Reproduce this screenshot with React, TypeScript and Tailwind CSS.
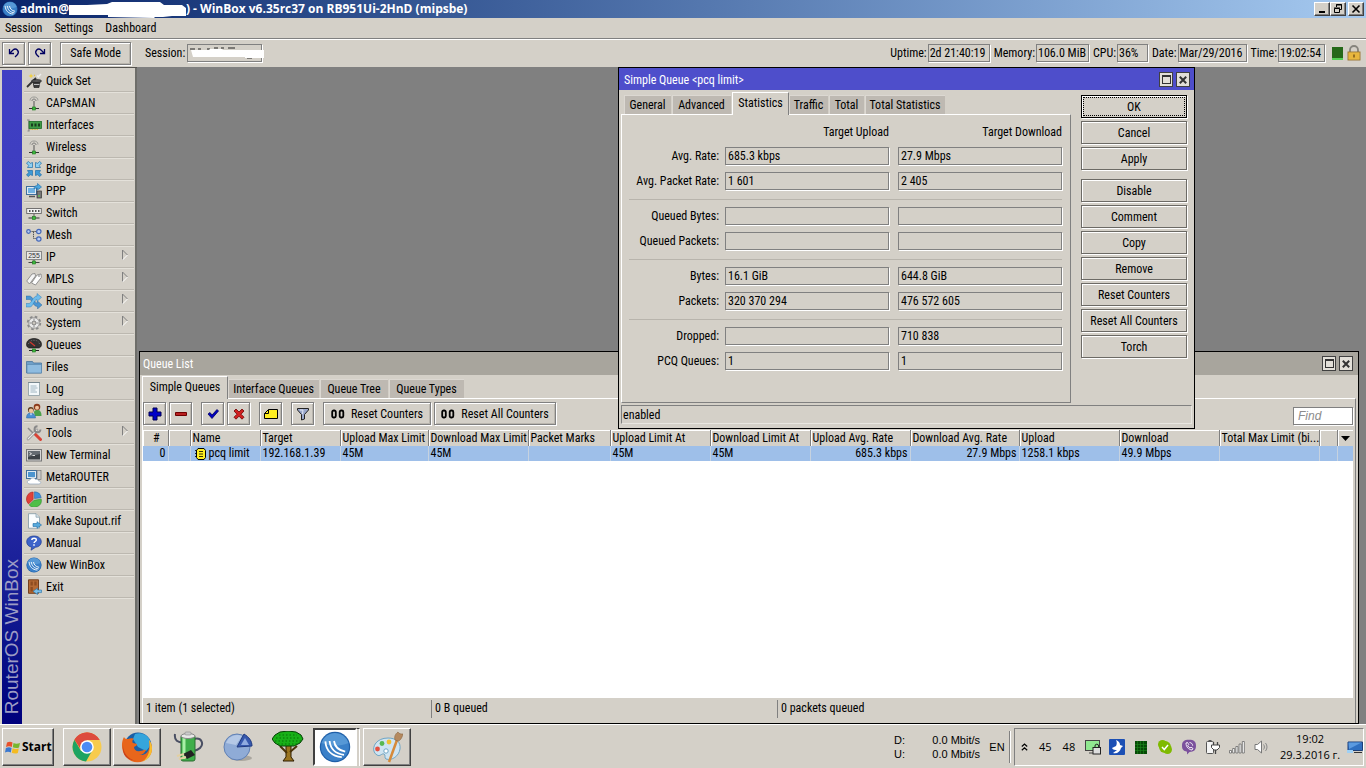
import React, { useState } from 'react';
import clsx from 'clsx';

type IconProps = { children: React.ReactNode; size?: 16 | 32; className?: string };

const Svg: React.FC<IconProps> = ({ children, size = 16, className = '' }) => (
  <svg
    viewBox={`0 0 ${size} ${size}`}
    width={size}
    height={size}
    fill="none"
    aria-hidden="true"
    className={clsx('shrink-0', className)}
  >
    {children}
  </svg>
);

const Antenna = () => (
  <Svg>
    <path d="M4 5.500C4 3 6 2 8 2s4 1 4 3.500" stroke="#9a9a96" />
    <path d="M6 6c0-1.300.9-1.900 2-1.900s2 .6 2 1.900" stroke="#777" />
    <path d="M8 6v7" stroke="#555" />
    <path d="M3 13.500h10" stroke="#333" />
    <rect x="6.500" y="12" width="3" height="3" fill="#3fb83f" stroke="#1d7a1d" strokeWidth=".6" />
  </Svg>
);

const Ball = ({ size = 16 }: { size?: 16 | 32 }) => (
  <svg viewBox="0 0 16 16" width={size} height={size} fill="none" aria-hidden="true" className="shrink-0">
    <circle cx="8" cy="8" r="7.600" fill="#1f5fa8" />
    <circle cx="8" cy="8" r="7" fill="#3a80c8" />
    <path d="M1.300 6a7 7 0 0 1 13.400 0C10 8 5 7.500 1.300 6z" fill="#69a8e0" opacity=".6" />
    <path
      d="M3.200 5.200c.3 4.300 3 7.500 8.200 7.900M5.300 5c.4 3.800 2.800 6.300 7.200 6.900M7.500 5c.4 2.700 2.200 4.700 5.600 5.300"
      stroke="#fff"
      strokeWidth=".9"
    />
  </svg>
);

const icons: Record<string, React.ReactNode> = {
  'Quick Set': (
    <Svg>
      <path d="M1 14L10 5" stroke="#333" strokeWidth="1.800" />
      <path d="M7 8h7l-1 6.500H8z" fill="#3b3b3b" stroke="#111" strokeWidth=".6" />
      <ellipse cx="10.500" cy="8" rx="5" ry="1.500" fill="#555" stroke="#111" strokeWidth=".6" />
      <path d="M8 11.500h5.500" stroke="#bbb" />
      <path d="M12 4l3-3M11 2.500l2 2" stroke="#eee" strokeWidth="1.500" />
      <path d="M5 .5l.7 1.800 1.800.7-1.800.7L5 5.500l-.7-1.800L2.500 3l1.800-.7z" fill="#f3d23a" />
      <path d="M8 1l.4 1 1 .4-1 .4-.4 1" fill="#e8b820" />
    </Svg>
  ),
  CAPsMAN: <Antenna />,
  Interfaces: (
    <Svg>
      <path d="M1 3h2v11H1.500" stroke="#888" strokeWidth="1.200" />
      <rect x="3" y="4.500" width="12.500" height="7" fill="#3f9a45" stroke="#1d6a26" strokeWidth=".8" />
      <path d="M5 6.500h2v3H5zM8.500 6.500h2v3h-2zM12 6.500h2v3h-2z" fill="#1a3b1e" />
      <path d="M4.500 12.500h8" stroke="#d3b63c" strokeDasharray="1 .6" />
    </Svg>
  ),
  Wireless: <Antenna />,
  Bridge: (
    <Svg>
      <g stroke="#1e6fa8" strokeWidth=".7">
        <path d="M.5 2l2-1.500 1.700 1.900L6.500 1.500v5h-5l1.200-2z" fill="#8fd0f2" />
        <path d="M15.500 2l-2-1.500-1.700 1.900-2.300-.9v5h5l-1.200-2z" fill="#8fd0f2" />
        <path d="M.5 14l2 1.500 1.700-1.900 2.300.9v-5h-5l1.200 2z" fill="#3f9ad6" />
        <path d="M15.500 14l-2 1.500-1.700-1.900-2.300.9v-5h5l-1.200 2z" fill="#3f9ad6" />
      </g>
    </Svg>
  ),
  PPP: (
    <Svg>
      <rect x=".5" y="3.500" width="10" height="8" fill="#dfe9f2" stroke="#3f6f9c" />
      <rect x="2" y="5" width="7" height="5" fill="#6fb1e2" />
      <path d="M3 13.500h6" stroke="#555" strokeWidth="1.500" />
      <rect x="11" y="8" width="4.500" height="7" fill="#777" stroke="#333" strokeWidth=".7" />
      <path d="M8 6c0-2.500 1.500-3.500 3.500-3.500V.5L15.500 4l-4 3V5C10 5 9 5 8 6z" fill="#4ba7e0" stroke="#1f6da6" strokeWidth=".6" />
      <path d="M12 13h2" stroke="#5ddb4d" />
    </Svg>
  ),
  Switch: (
    <Svg>
      <rect x=".7" y="3.500" width="14.600" height="5" fill="#f2f2f2" stroke="#666" strokeWidth=".9" />
      <path d="M3 6h1.500M6 6h1.500M9 6h1.500M12 6h1.500" stroke="#222" strokeWidth="1.500" />
      <path d="M8 9v3" stroke="#555" />
      <path d="M2.500 13h11" stroke="#333" />
      <rect x="6.500" y="11.500" width="3" height="3" fill="#3fb83f" stroke="#1d7a1d" strokeWidth=".6" />
    </Svg>
  ),
  Mesh: (
    <Svg>
      <path d="M4 4.500h7M7.500 4.500v7H11" stroke="#555" strokeDasharray="1.500 .7" />
      <g fill="#b9cdf3" stroke="#4568b8" strokeWidth="1.200">
        <circle cx="2.500" cy="4.500" r="1.800" />
        <circle cx="12.800" cy="4.500" r="2.200" />
        <circle cx="12.800" cy="12" r="2.200" />
      </g>
    </Svg>
  ),
  IP: (
    <Svg>
      <rect x=".5" y="2.500" width="15" height="8" fill="#e9e9e9" stroke="#888" />
      <text x="8" y="9" textAnchor="middle" fontSize="7" fill="#333" className="font-['Liberation_Sans']">255</text>
      <path d="M8 11v2M2.500 13.500h11" stroke="#444" />
      <rect x="6.500" y="12" width="3" height="3" fill="#3fb83f" stroke="#1d7a1d" strokeWidth=".6" />
    </Svg>
  ),
  MPLS: (
    <Svg>
      <path d="M.7 10L6 3l3-.5.500 2.500-6 8z" fill="#f4f4f4" stroke="#7d7d7d" strokeWidth=".8" />
      <path d="M5.500 12L11 4l4-1 .3 3.500L9.500 14z" fill="#fdfdfd" stroke="#7d7d7d" strokeWidth=".8" />
      <circle cx="13" cy="5" r=".8" fill="#666" />
    </Svg>
  ),
  Routing: (
    <Svg>
      <path d="M0 3h3.500c3 0 5 7 8 7V8l4.500 4-4.500 4v-2.500C7 13.500 6 6.500 3.500 6.500H0z" fill="#4b96d2" stroke="#1d5c96" strokeWidth=".4" />
      <path d="M0 14h4c3 0 4-7.500 7-7.500v2L15.500 4.300 11 .5V3C7 3 5.500 10.500 3 10.500H0z" fill="#6fbcec" stroke="#1d6ca6" strokeWidth=".4" />
    </Svg>
  ),
  System: (
    <Svg>
      <circle cx="8" cy="8" r="6.300" stroke="#8a8a8a" strokeWidth="1.800" strokeDasharray="2.600 2.350" />
      <circle cx="8" cy="8" r="5.300" fill="#e9e9e9" stroke="#8f8f8f" strokeWidth=".8" />
      <circle cx="8" cy="8" r="2" fill="#c9c5bd" stroke="#777" strokeWidth=".9" />
      <path d="M8 3.500v2M8 10.500v2M3.500 8h2M10.500 8h2" stroke="#888" />
    </Svg>
  ),
  Queues: (
    <Svg>
      <path d="M.5 7.500C.5 3.500 4 1.500 8 1.500s7.500 2 7.500 6c0 2-1.500 3.500-3 3.500h-9c-1.500 0-3-1.500-3-3.500z" fill="#333" stroke="#111" strokeWidth=".6" />
      <path d="M2.500 7C3 4.500 5 3.300 8 3.300s5 1.200 5.500 3.700" stroke="#777" strokeWidth=".9" strokeDasharray="1 1.200" />
      <path d="M4 5l5 4" stroke="#d03a2e" strokeWidth="1.200" />
      <path d="M3 13.500h10" stroke="#222" />
      <rect x="6.500" y="12" width="3" height="3" fill="#3fb83f" stroke="#1d7a1d" strokeWidth=".6" />
    </Svg>
  ),
  Files: (
    <Svg>
      <path d="M.5 2.500h6l1 1.500h8v10H.5z" fill="#6f9fc8" stroke="#47749c" strokeWidth=".8" />
      <path d="M1 5.500h14.500V14H1z" fill="#8fbce0" stroke="#5a88b0" strokeWidth=".7" />
    </Svg>
  ),
  Log: (
    <Svg>
      <path d="M2.500 1.500h11v13h-11z" fill="#f3f8fa" stroke="#8a9aa2" strokeWidth=".8" />
      <path d="M2.500 1.500h11" stroke="#56666e" strokeDasharray="1 1" />
      <path d="M4.500 5h6M4.500 7h7M4.500 9h5M4.500 11h6.500" stroke="#97aebb" strokeWidth=".9" />
    </Svg>
  ),
  Radius: (
    <Svg>
      <path d="M8 9.500c0-2 1.500-2.500 3.500-2.500S15.500 8 15.500 13H9z" fill="#4ba14b" />
      <circle cx="11" cy="4" r="3.300" fill="#8c3b1c" />
      <circle cx="11" cy="4.800" r="2" fill="#f0c39c" />
      <path d="M.5 15c0-3.500 1.500-5 4-5s5 1.500 5 5z" fill="#4b8fd2" stroke="#2a62a0" strokeWidth=".5" />
      <circle cx="4.800" cy="6.800" r="2.900" fill="#5b3a1c" />
      <circle cx="5" cy="7.700" r="2.200" fill="#f0c39c" />
      <path d="M4 10.500l1 2 1-2" fill="#fff" />
    </Svg>
  ),
  Tools: (
    <Svg>
      <path d="M2 3l6 6" stroke="#8a8a8a" strokeWidth="1.500" />
      <path d="M8.500 8.500l6 6" stroke="#d94336" strokeWidth="3" strokeLinecap="round" />
      <path d="M2 14l9-9" stroke="#8a8a8a" strokeWidth="2.600" strokeLinecap="round" />
      <path d="M2 14l9-9" stroke="#e9e9e9" strokeWidth="1.200" strokeLinecap="round" />
      <path d="M14.500 4.500A3 3 0 1 1 11.500 1.300" stroke="#888" strokeWidth="1.900" />
    </Svg>
  ),
  'New Terminal': (
    <Svg>
      <rect x=".5" y="2.500" width="15" height="11.500" fill="#d7d7d7" stroke="#777" />
      <rect x="2" y="4" width="12" height="8.500" fill="#3c4248" />
      <path d="M2 4h12v3L2 10z" fill="#646b72" />
      <path d="M3.500 5.500l2 1.200-2 1.200M6.500 8.500h2.500" stroke="#fff" strokeWidth=".8" />
    </Svg>
  ),
  MetaROUTER: (
    <Svg>
      <rect x=".5" y="1.500" width="10" height="8" fill="#dfe9f2" stroke="#3f6f9c" />
      <rect x="2" y="3" width="7" height="5" fill="#4c94cf" />
      <rect x="11" y="1.500" width="4" height="9" fill="#ccc" stroke="#777" strokeWidth=".7" />
      <path d="M4 15c-3.500 0-3.500-4 0-4 .5-2.500 5-2.500 5.500-.5 2-.5 3 .5 3 1.500 3 0 3 3 0 3z" fill="#fff" stroke="#92a8bd" strokeWidth=".7" />
    </Svg>
  ),
  Partition: (
    <Svg>
      <path d="M7.200 8.500V1A7 7 0 0 0 2.500 13z" fill="#e0413a" stroke="#9c1b16" strokeWidth=".5" />
      <path d="M8.500 7.500V.8a7 7 0 0 1 6.700 6z" fill="#3f8fda" stroke="#1c5a9c" strokeWidth=".5" />
      <path d="M8 9.200l7.300-1A7 7 0 0 1 3.200 14z" fill="#4fbf47" stroke="#237c1f" strokeWidth=".5" />
    </Svg>
  ),
  'Make Supout.rif': (
    <Svg>
      <path d="M2.500 .7h7.500l3.500 3.500v11h-11z" fill="#fafdfe" stroke="#8298a4" strokeWidth=".8" />
      <path d="M10 .7v3.500h3.500" fill="#d4e2ea" stroke="#8298a4" strokeWidth=".7" />
      <path d="M7 10.500h4V8.700l4.500 3.300-4.500 3.300v-1.800H7z" fill="#55a9dc" stroke="#1f6da6" strokeWidth=".6" />
    </Svg>
  ),
  Manual: (
    <Svg>
      <path d="M8 1c4.500 0 7.300 2.500 7.300 5.800S12.500 12 9.500 12.300L5 15.200l.7-3C2.500 11.500.7 9.500.7 6.800.7 3.500 3.500 1 8 1z" fill="#3d63c9" stroke="#1c3a8f" strokeWidth=".7" />
      <path d="M5.800 5c.2-2.500 4.600-2.300 4.500 0 0 1.500-2.200 1.500-2.200 3M8 9.300v1.400" stroke="#fff" strokeWidth="1.500" />
    </Svg>
  ),
  'New WinBox': <Ball />,
  Exit: (
    <Svg>
      <path d="M2.500 .8h10v13.500h-10z" fill="#b56a34" stroke="#6c3714" strokeWidth=".9" />
      <path d="M4.500 2.500h2.300v4H4.500zM8.300 2.500h2.300v4H8.300zM4.500 8h2.300v4.500H4.500z" fill="#8e4c20" />
      <path d="M15.500 11h-4V9.200L7 12.300l4.500 3.200v-1.900h4z" fill="#7cc0ea" stroke="#2370a8" strokeWidth=".6" />
    </Svg>
  ),
};

const menuItems = [
  { label: 'Quick Set' },
  { label: 'CAPsMAN' },
  { label: 'Interfaces' },
  { label: 'Wireless' },
  { label: 'Bridge' },
  { label: 'PPP' },
  { label: 'Switch' },
  { label: 'Mesh' },
  { label: 'IP', sub: true },
  { label: 'MPLS', sub: true },
  { label: 'Routing', sub: true },
  { label: 'System', sub: true },
  { label: 'Queues' },
  { label: 'Files' },
  { label: 'Log' },
  { label: 'Radius' },
  { label: 'Tools', sub: true },
  { label: 'New Terminal' },
  { label: 'MetaROUTER' },
  { label: 'Partition' },
  { label: 'Make Supout.rif' },
  { label: 'Manual' },
  { label: 'New WinBox' },
  { label: 'Exit' },
];

const raised = 'border border-[#6c6a65] bg-[#d4d0c8] shadow-[inset_1px_1px_0_#fff,1px_1px_0_#fff]';
const toolBtn = 'flex h-[23px] items-center justify-center border border-[#808080] bg-[#d4d0c8] shadow-[inset_1px_1px_0_#fff,inset_-1px_-1px_0_#bab6ae,1px_1px_0_#fff]';
const sunken = 'border border-[#808080] bg-[#d4d0c8] shadow-[1px_1px_0_#fff]';
const classic = 'border border-t-white border-l-white border-r-[#404040] border-b-[#404040] bg-[#d4d0c8] shadow-[inset_-1px_-1px_0_#808080]';

const TitleBar = () => (
  <header className="flex h-[18px] shrink-0 items-center bg-linear-to-r from-[#0a246a] to-[#a6caf0] pl-[2px] pr-[2px] text-white">
    <Ball />
    <h1 className="ml-[2px] flex items-center font-['Open_Sans'] text-[12px] font-bold leading-[18px]">
      admin@
      <svg width="117" height="18" viewBox="0 0 117 18" aria-hidden="true">
        <path d="M0 5h18l20-1 5-2h48l4 3h18l4 3v8h-14l-9 1H86l-1 1-46-1v-2H0z" fill="#fff" />
      </svg>
      <span>) - WinBox v6.35rc37 on RB951Ui-2HnD (mipsbe)</span>
    </h1>
    <div className="ml-auto flex h-[14px]">
      <button aria-label="Minimize" className={clsx(classic, 'flex w-4 items-end justify-center pb-[2px]')}>
        <span className="h-[2px] w-[6px] bg-black" />
      </button>
      <button aria-label="Restore" className={clsx(classic, 'flex w-4 items-center justify-center')}>
        <svg width="10" height="10" viewBox="0 0 10 10" fill="none" stroke="#000" aria-hidden="true">
          <path d="M3.500 3V.5h5v5H7M3 1h6M1.500 4.500h5v4h-5zM1 4h6" />
        </svg>
      </button>
      <button aria-label="Close" className={clsx(classic, 'ml-[2px] flex w-4 items-center justify-center')}>
        <svg width="10" height="10" viewBox="0 0 10 10" stroke="#000" strokeWidth="1.600" aria-hidden="true">
          <path d="M1.500 1.500l7 7M8.500 1.500l-7 7" />
        </svg>
      </button>
    </div>
  </header>
);

const stats = [
  { id: 'uptime', label: 'Uptime:', value: '2d 21:40:19', width: 'w-[62px]' },
  { id: 'memory', label: 'Memory:', value: '106.0 MiB', width: 'w-[53px]' },
  { id: 'cpu', label: 'CPU:', value: '36%', width: 'w-[31px]' },
  { id: 'date', label: 'Date:', value: 'Mar/29/2016', width: 'w-[69px]' },
  { id: 'time', label: 'Time:', value: '19:02:54', width: 'w-[47px]' },
];

const Toolbar = () => (
  <div className="flex h-[29px] shrink-0 items-center border-t border-[#808080] px-[2px] shadow-[inset_0_1px_0_#fff]">
    <button aria-label="Undo" className={clsx(toolBtn, 'w-[23px]')}>
      <svg width="14" height="12" viewBox="0 0 14 12" fill="none" stroke="#000060" strokeWidth="1.300" aria-hidden="true">
        <path d="M2.500 2v4.500H7M3 6l3-3c3-2.500 7 1 4.500 4.500L8 10" />
      </svg>
    </button>
    <button aria-label="Redo" className={clsx(toolBtn, 'ml-[3px] w-[23px]')}>
      <svg width="14" height="12" viewBox="0 0 14 12" fill="none" stroke="#000060" strokeWidth="1.300" aria-hidden="true">
        <path d="M11.500 2v4.500H7M11 6L8 3C5 .5 1 4 3.500 7.500L6 10" />
      </svg>
    </button>
    <button className={clsx(toolBtn, 'ml-[9px] w-[71px]')}>Safe Mode</button>
    <label htmlFor="session" className="ml-[14px] w-[42px]">Session:</label>
    <div className="relative">
      <input id="session" readOnly className={clsx(sunken, 'block h-[18px] w-[75px]')} />
      <svg width="80" height="18" viewBox="0 0 80 18" fill="none" className="absolute top-0 left-0" aria-hidden="true">
        <path d="M3 5h5M11 5h3M20 5h3M27 4h4M34 4h3M41 4h7M60 14h5" stroke="#222" />
        <path d="M4 6h18l1-1h12l1 1h41v8H58v-1H6z" fill="#fff" />
      </svg>
    </div>
    <div className="ml-auto flex items-center">
      {stats.map((s) => (
        <div key={s.id} className="mr-1 flex items-center">
          <label htmlFor={s.id} className="mr-px">{s.label}</label>
          <input id={s.id} readOnly value={s.value} className={clsx(sunken, 'h-[18px] px-px', s.width)} />
        </div>
      ))}
      <span className="mx-[3px] h-[13px] w-[11px] border-b-2 border-[#55d055] bg-[#26691a]" />
      <Svg className="mr-[2px]">
        <path d="M4 7V5a4 4 0 0 1 8 0v2" stroke="#85837c" strokeWidth="1.800" />
        <rect x="2" y="7" width="12" height="8" fill="#f4c64a" stroke="#97702a" strokeWidth=".9" />
        <path d="M3 9h10M3 11h10M3 13h10" stroke="#d79e2c" strokeWidth=".8" />
        <path d="M8 9.500v3" stroke="#6b4a13" strokeWidth="1.300" />
      </Svg>
    </div>
  </div>
);

const Sidebar = () => (
  <div className="flex w-[137px] shrink-0 border-r-2 border-[#6e6e6a] pl-[2px] pt-[2px]">
    <div className="flex w-5 items-end justify-center bg-linear-to-b from-[#4040c4] via-[#3838b8] to-[#00007c] pb-[10px]">
      <span className="rotate-180 whitespace-nowrap font-['Liberation_Sans'] text-[19px] leading-5 text-[#9c9cc4] [writing-mode:vertical-rl]">
        RouterOS WinBox
      </span>
    </div>
    <nav className="ml-[2px] w-[110px]">
      {menuItems.map((item) => (
        <button
          key={item.label}
          className="flex h-[22px] w-full items-center gap-1 border-b border-[#bcb8b0] pl-[2px] text-left shadow-[0_1px_0_#e4e1da]"
        >
          {icons[item.label]}
          <span>{item.label}</span>
          {item.sub && (
            <svg width="7" height="12" viewBox="0 0 7 12" fill="none" className="ml-auto mr-[5px] mb-1" aria-hidden="true">
              <path d="M.5 11V1" stroke="#808080" />
              <path d="M.5 1l5 5" stroke="#808080" />
              <path d="M5.500 6l-5 5" stroke="#fff" />
            </svg>
          )}
        </button>
      ))}
    </nav>
  </div>
);

interface TabsProps {
  tabs: { label: string; width: string }[];
  active: string;
  onSelect: (label: string) => void;
}

const Tabs: React.FC<TabsProps> = ({ tabs, active, onSelect }) => (
  <div role="tablist" className="flex h-[22px] items-end">
    {tabs.map(({ label, width }) => (
      <button
        key={label}
        role="tab"
        aria-selected={active === label}
        onClick={() => onSelect(label)}
        className={clsx(
          'whitespace-nowrap border-r text-center',
          width,
          active === label
            ? 'relative -mb-px h-[23px] border-t border-l border-t-white border-l-white border-r-[#808080] bg-[#d4d0c8] pb-[2px]'
            : 'h-[19px] border-[#d4d0c8] bg-[#beb9b2] shadow-[inset_1px_1px_0_#dcd8d2]',
        )}
      >
        {label}
      </button>
    ))}
  </div>
);

const WindowButtons = () => (
  <div className="ml-auto flex gap-[3px]">
    <button aria-label="Maximize window" className="flex h-[15px] w-[14px] items-center justify-center border border-[#404040] bg-[#e2dfd8]">
      <span className="size-[9px] border border-t-2 border-[#333]" />
    </button>
    <button aria-label="Close window" className="flex h-[15px] w-[14px] items-center justify-center border border-[#404040] bg-[#e2dfd8]">
      <svg width="8" height="8" viewBox="0 0 8 8" stroke="#333" strokeWidth="2" aria-hidden="true">
        <path d="M.8.8l6.400 6.400M7.200.8L.8 7.200" />
      </svg>
    </button>
  </div>
);

const columns = [
  { title: '#', width: 'w-[25px]', value: '0', align: 'text-right', head: 'text-center' },
  { title: '', width: 'w-[22px]', value: '' },
  { title: 'Name', width: 'w-[70px]', value: 'pcq limit' },
  { title: 'Target', width: 'w-[80px]', value: '192.168.1.39' },
  { title: 'Upload Max Limit', width: 'w-[88px]', value: '45M' },
  { title: 'Download Max Limit', width: 'w-[100px]', value: '45M' },
  { title: 'Packet Marks', width: 'w-[82px]', value: '' },
  { title: 'Upload Limit At', width: 'w-[100px]', value: '45M' },
  { title: 'Download Limit At', width: 'w-[100px]', value: '45M' },
  { title: 'Upload Avg. Rate', width: 'w-[100px]', value: '685.3 kbps', align: 'text-right' },
  { title: 'Download Avg. Rate', width: 'w-[109px]', value: '27.9 Mbps', align: 'text-right' },
  { title: 'Upload', width: 'w-[100px]', value: '1258.1 kbps' },
  { title: 'Download', width: 'w-[100px]', value: '49.9 Mbps' },
  { title: 'Total Max Limit (bi...', width: 'w-[100px]', value: '' },
  { title: ' ', width: 'w-auto', value: '' },
];

const QueueTable = () => (
  <div className="flex flex-1 items-start bg-white">
    <div className="min-w-0 flex-1">
      <table className="w-full table-fixed border-collapse">
        <thead>
          <tr className="h-4 bg-[#d4d0c8]">
            {columns.map((c) => (
              <th
                key={c.title}
                scope="col"
                className={clsx(
                  'whitespace-nowrap border-r border-[#808080] p-0 pl-[2px] font-normal leading-4 shadow-[inset_1px_1px_0_#fff]',
                  c.width,
                  c.head ?? 'text-left',
                )}
              >
                {c.title}
              </th>
            ))}
          </tr>
        </thead>
        <tbody>
          <tr className="h-[15px] bg-[#9ebfe9]">
            {columns.map((c) => (
              <td
                key={c.title}
                className={clsx('whitespace-nowrap border-r border-[#c6d2e0] p-0 px-[2px] leading-[15px]', c.align)}
              >
                {c.title === 'Name' ? (
                  <span className="flex items-center gap-[2px] pl-[2px]">
                    <svg width="12" height="12" viewBox="0 0 12 12" fill="none" stroke="#000" aria-hidden="true">
                      <path d="M3 .5h6l1.500 2v7l-1.500 2H3l-1.500-2v-7z" fill="#ffee20" />
                      <path d="M0 2.500h2M0 5.500h2M0 8.500h2M4 3.500h4M4 6h4M4 8.500h4" strokeWidth=".8" />
                    </svg>
                    {c.value}
                  </span>
                ) : (
                  c.value
                )}
              </td>
            ))}
          </tr>
        </tbody>
      </table>
    </div>
    <div className="h-[31px] w-[15px] shrink-0 bg-[#9ebfe9]">
      <button aria-label="Choose columns" className="flex h-4 w-full items-center justify-center bg-[#d4d0c8] shadow-[inset_1px_1px_0_#fff]">
        <svg width="9" height="5" viewBox="0 0 9 5" aria-hidden="true">
          <path d="M0 0h9L4.500 5z" fill="#000" />
        </svg>
      </button>
    </div>
  </div>
);

const Counter = () => (
  <svg width="14" height="10" viewBox="0 0 14 10" fill="none" stroke="#000" strokeWidth="1.800" aria-hidden="true">
    <rect x="1.200" y="1.500" width="3.600" height="7" rx="1.500" />
    <rect x="8.700" y="1.500" width="3.600" height="7" rx="1.500" />
  </svg>
);

const queueTabs = [
  { label: 'Simple Queues', width: 'w-[86px]' },
  { label: 'Interface Queues', width: 'w-[92px]' },
  { label: 'Queue Tree', width: 'w-[69px]' },
  { label: 'Queue Types', width: 'w-[76px]' },
];

const QueueList = () => {
  const [tab, setTab] = useState('Simple Queues');

  return (
    <section className="absolute right-[7px] bottom-0 left-[2px] flex h-[373px] flex-col border border-black bg-[#d4d0c8] px-[2px]">
      <div className="-mx-[2px] flex h-[23px] items-center bg-[#a8a59d] pr-[5px] pl-[3px] text-white">
        <h2>Queue List</h2>
        <WindowButtons />
      </div>
      <div className="pt-px">
        <Tabs tabs={queueTabs} active={tab} onSelect={setTab} />
      </div>
      <div className="flex flex-1 flex-col border-t border-l border-r border-t-white border-l-white border-r-[#808080] pr-[2px]">
        <div className="flex h-[31px] items-start pt-[3px]">
          <button aria-label="Add" className={clsx(toolBtn, 'w-[23px]')}>
            <svg width="14" height="14" viewBox="0 0 14 14" aria-hidden="true">
              <path d="M5 1h4v4h4v4H9v4H5V9H1V5h4z" fill="#0000c8" stroke="#000050" />
            </svg>
          </button>
          <button aria-label="Remove" className={clsx(toolBtn, 'ml-[3px] w-[23px]')}>
            <svg width="14" height="14" viewBox="0 0 14 14" aria-hidden="true">
              <path d="M1.500 5.500h11v3h-11z" fill="#b82020" stroke="#700000" />
            </svg>
          </button>
          <button aria-label="Enable" className={clsx(toolBtn, 'ml-[9px] w-[23px]')}>
            <svg width="14" height="14" viewBox="0 0 14 14" aria-hidden="true">
              <path d="M2 7l2-1.500L6 8l5-5.500L12.500 4 6 11.500z" fill="#0000c0" stroke="#000060" strokeWidth=".8" />
            </svg>
          </button>
          <button aria-label="Disable" className={clsx(toolBtn, 'ml-[3px] w-[23px]')}>
            <svg width="14" height="14" viewBox="0 0 14 14" aria-hidden="true">
              <path d="M2 4l2-2 3 3 3-3 2 2-3 3.200 3 3-2 2-3-3-3 3-2-2 3-3z" fill="#d02020" stroke="#700000" strokeWidth=".8" />
            </svg>
          </button>
          <button aria-label="Comment" className={clsx(toolBtn, 'ml-[9px] w-[23px]')}>
            <svg width="14" height="12" viewBox="0 0 14 12" fill="#ffee20" stroke="#000" aria-hidden="true">
              <path d="M4.500 1.500h9v9h-13v-5zM4.500 1.500v4h-4" />
            </svg>
          </button>
          <button aria-label="Filter" className={clsx(toolBtn, 'ml-[9px] w-[23px]')}>
            <svg width="14" height="14" viewBox="0 0 14 14" aria-hidden="true">
              <path d="M1.500 1.500h11v1.500L8.500 7.500V12l-3 1V7.500L1.500 3z" fill="#9aa8cc" stroke="#222" />
              <path d="M4 3h3l-.5 4" fill="none" stroke="#e4e9f6" />
            </svg>
          </button>
          <button className={clsx(toolBtn, 'ml-[9px] w-[108px] gap-[6px]')}>
            <Counter />
            Reset Counters
          </button>
          <button className={clsx(toolBtn, 'ml-[3px] w-[122px] gap-[6px]')}>
            <Counter />
            Reset All Counters
          </button>
          <input
            aria-label="Find"
            placeholder="Find"
            className="mt-[5px] ml-auto h-[18px] w-[60px] border border-[#808080] bg-white px-1 font-['Liberation_Sans'] text-[12px] italic shadow-[1px_1px_0_#fff] placeholder:text-[#8c8c8c]"
          />
        </div>
        <QueueTable />
        <div className="flex h-[25px] items-start pt-[2px]">
          <span className="h-[18px] w-[289px] border-r border-[#808080] pl-[3px]">1 item (1 selected)</span>
          <span className="h-[18px] w-[346px] border-r border-[#808080] pl-[3px]">0 B queued</span>
          <span className="h-[18px] pl-[3px]">0 packets queued</span>
        </div>
      </div>
    </section>
  );
};

const dialogTabs = [
  { label: 'General', width: 'w-[48px]' },
  { label: 'Advanced', width: 'w-[60px]' },
  { label: 'Statistics', width: 'w-[57px]' },
  { label: 'Traffic', width: 'w-[40px]' },
  { label: 'Total', width: 'w-[36px]' },
  { label: 'Total Statistics', width: 'w-[81px]' },
];

const statGroups = [
  [
    { label: 'Avg. Rate:', up: '685.3 kbps', down: '27.9 Mbps' },
    { label: 'Avg. Packet Rate:', up: '1 601', down: '2 405' },
  ],
  [
    { label: 'Queued Bytes:', up: '', down: '' },
    { label: 'Queued Packets:', up: '', down: '' },
  ],
  [
    { label: 'Bytes:', up: '16.1 GiB', down: '644.8 GiB' },
    { label: 'Packets:', up: '320 370 294', down: '476 572 605' },
  ],
  [
    { label: 'Dropped:', up: '', down: '710 838' },
    { label: 'PCQ Queues:', up: '1', down: '1' },
  ],
];

const actions = ['Disable', 'Comment', 'Copy', 'Remove', 'Reset Counters', 'Reset All Counters', 'Torch'];

const SimpleQueueDialog = () => {
  const [tab, setTab] = useState('Statistics');

  return (
    <section
      role="dialog"
      aria-label="Simple Queue"
      className="absolute top-0 left-[481px] z-10 flex w-[577px] flex-col border border-black bg-[#d4d0c8]"
    >
      <div className="flex h-[22px] items-center bg-[#4e4ecb] pr-1 pl-[5px] pt-px text-white">
        <h2>Simple Queue &lt;pcq limit&gt;</h2>
        <WindowButtons />
      </div>
      <div className="flex px-[2px] pt-[2px]">
        <div className="w-[450px]">
          <div className="pl-[3px]">
            <Tabs tabs={dialogTabs} active={tab} onSelect={setTab} />
          </div>
          <div className="h-[289px] border border-t-white border-l-white border-r-[#808080] border-b-[#808080] pt-2 pr-2 pl-[7px]">
            <div className="flex justify-end gap-[9px] text-right leading-[18px]">
              <span className="w-[164px]">Target Upload</span>
              <span className="w-[164px]">Target Download</span>
            </div>
            {statGroups.map((group, i) => (
              <div
                key={group[0].label}
                className={clsx('flex flex-col gap-[7px]', i === 0 ? 'pt-[6px]' : 'mt-[9px] border-t border-[#b8b4ac] pt-[7px]')}
              >
                {group.map((row) => (
                  <div key={row.label} className="flex items-center">
                    <label htmlFor={row.label} className="mr-[6px] flex-1 whitespace-nowrap text-right">{row.label}</label>
                    <input id={row.label} readOnly value={row.up} className={clsx(sunken, 'h-[18px] w-[164px] px-[2px]')} />
                    <input
                      aria-label={`${row.label} download`}
                      readOnly
                      value={row.down}
                      className={clsx(sunken, 'ml-[9px] h-[18px] w-[164px] px-[2px]')}
                    />
                  </div>
                ))}
              </div>
            ))}
          </div>
        </div>
        <div className="ml-[10px] flex w-[106px] flex-col gap-[3px] pt-[3px]">
          <button className="h-[23px] border border-black bg-[#d4d0c8] p-px shadow-[inset_1px_1px_0_#fff,1px_1px_0_#fff]">
            <span className="flex h-full items-center justify-center border border-dotted border-black">OK</span>
          </button>
          <button className={clsx(raised, 'h-[23px]')}>Cancel</button>
          <button className={clsx(raised, 'mb-[6px] h-[23px]')}>Apply</button>
          {actions.map((a) => (
            <button key={a} className={clsx(raised, 'h-[23px]')}>{a}</button>
          ))}
        </div>
      </div>
      <div className="mx-[2px] mt-[2px] mb-1 h-[19px] border border-t-[#808080] border-l-[#808080] border-r-[#e8e6e0] border-b-[#e8e6e0] px-px leading-[18px]">
        enabled
      </div>
    </section>
  );
};

const taskIcons = {
  chrome: (
    <Svg size={32}>
      <circle cx="16" cy="16" r="14.500" fill="#f7cb4d" />
      <path d="M16 16L3.500 8.500A14.500 14.500 0 0 1 28.600 9H16z" fill="#dd4b3e" />
      <path d="M3.500 8.700A14.500 14.500 0 0 0 15 30.500L21.500 19 10 20z" fill="#1da362" />
      <path d="M3.500 8.700A14.500 14.500 0 0 1 28.600 9H16a7 7 0 0 0-6.500 9z" fill="#dd4b3e" />
      <circle cx="16" cy="16" r="6.800" fill="#fff" />
      <circle cx="16" cy="16" r="5.300" fill="#4c8bf5" />
    </Svg>
  ),
  firefox: (
    <Svg size={32}>
      <circle cx="17" cy="15" r="13.500" fill="#1a5fa6" />
      <path d="M14 3c8-3 16 3 16 11l-5 6-8-4-5-8z" fill="#35a5dc" />
      <path d="M3 6c1 2 2 2 4 2 2-1 5-1 6 0-2 1-2 3-1 4l4 1c0 2-2 2-3 3 0 3 3 5 6 4 3 0 4-2 6-1-1 3-4 5-7 5 8 1 12-5 10-15 4 5 4 12 0 17-6 7-17 7-23 0C0 20 0 11 3 6z" fill="#e8661b" />
      <path d="M28 9c4 5 4 12 0 17-2 2-4 3.500-6.500 4.500C28 26 30 18 28 9z" fill="#f8bf2e" />
      <path d="M2 14c0 8 5 14 13 16-6-1-10-3-12-7-1-3-1.500-6-1-9z" fill="#c8401a" />
    </Svg>
  ),
  battery: (
    <Svg size={32}>
      <path d="M3 3c-1 7 3 8 8 9M22 8c8-2 10 5 6 9s-9 2-11 5" stroke="#4a4f63" strokeWidth="2" />
      <rect x="9" y="4" width="14" height="26" rx="2" fill="#3fae4a" stroke="#2b6e31" />
      <path d="M12 6v22" stroke="#a9efa6" strokeWidth="3" />
      <ellipse cx="16" cy="5" rx="7" ry="2.500" fill="#e8e8e8" stroke="#888" />
      <rect x="13" y="1" width="6" height="3" rx="1" fill="#ccc" stroke="#888" strokeWidth=".6" />
      <path d="M11 23l8-4 4 5-8 4z" fill="#222" />
      <path d="M5 25l7-2M7 28l7-2" stroke="#e3cfa0" strokeWidth="2" />
    </Svg>
  ),
  pie: (
    <Svg size={32}>
      <ellipse cx="19" cy="27" rx="11" ry="3" fill="#aaa69e" />
      <circle cx="15" cy="16" r="13" fill="#8fabd6" stroke="#6080b4" />
      <path d="M4 12A12 12 0 0 1 20 5l-6 9z" fill="#b4c8e6" />
      <path d="M15 16L22 3c5 3 8 7 8 12z" fill="#3658ad" stroke="#203a80" />
      <path d="M19 14l4-7 4 7z" fill="#8fabe0" />
    </Svg>
  ),
  tree: (
    <Svg size={32}>
      <path d="M14 14h5v12l3 4H11l3-4z" fill="#9a7420" stroke="#2c1c00" />
      <path d="M15 22l-7-7M18 21l7-6" stroke="#4a3208" strokeWidth="2" />
      <path d="M3 4l5-3 8-1 8 1 5 3 2 4-3 4-6 3H8l-5-3-3-4z" fill="#18b018" stroke="#033f03" />
      <path d="M4 7h24M3 10h26M6 13h20M7 4h18" stroke="#067006" strokeWidth="1.200" strokeDasharray="1.500 2" />
    </Svg>
  ),
  paint: (
    <Svg size={32}>
      <path d="M17 7c8 0 13 4 12 11s-8 12-14 10c-2-1 0-4-2-5s-4 3-7 1C-1 20 3 7 17 7z" fill="#cfe4f1" stroke="#6fa5c4" />
      <circle cx="6.500" cy="18" r="2.400" fill="#e35040" />
      <circle cx="11" cy="12.500" r="2.400" fill="#58b850" />
      <circle cx="18" cy="11" r="2.400" fill="#f2c030" />
      <circle cx="15" cy="20" r="2.200" fill="#fff" stroke="#6fa5c4" />
      <path d="M18 31L26 9" stroke="#d68a3a" strokeWidth="2.500" />
      <path d="M24 9c-1-3 0-6 3-8 1 2 3 2 5 2-1 4-3 7-5 7z" fill="#b58a60" stroke="#8a6440" strokeWidth=".6" />
    </Svg>
  ),
};

const trayIcons = (
  <>
    <Svg>
      <rect x=".5" y="1.500" width="14" height="10" fill="#90e890" stroke="#444" />
      <path d="M4 14h6" stroke="#444" />
      <rect x="8" y="8.500" width="7.500" height="6.500" fill="#ddd" stroke="#222" />
      <path d="M10 8.500V7a1.800 1.800 0 0 1 3.600 0v1.500" stroke="#222" />
    </Svg>
    <Svg>
      <rect width="16" height="16" rx="1" fill="#1b4fb4" />
      <path d="M7 1c1 2 1 4 0 6L3 9c1 2 3 2 5 2l-4 3c4 1 7-1 8-5l2-2-3-1c0-2-1-4-4-5z" fill="#fff" />
    </Svg>
    <Svg>
      <rect x="2" y="2" width="12" height="13" fill="#064a06" />
      <path d="M4.500 2v13M7.500 2v13M10.500 2v13M2 5.500h12M2 8.500h12M2 11.500h12" stroke="#1c8a1c" strokeWidth=".6" />
    </Svg>
    <Svg>
      <circle cx="5.500" cy="5.500" r="4.500" fill="#7fba00" />
      <circle cx="10.500" cy="10.500" r="4.500" fill="#7fba00" />
      <circle cx="8" cy="8" r="6" fill="#7fba00" />
      <path d="M5 8l2.300 2.500L11 6" stroke="#fff" strokeWidth="1.500" />
    </Svg>
    <Svg>
      <path d="M8 .8c5 0 7 1.700 7 6s-2 6-6.500 6.200L6 15.500v-2.800C2.500 12 1 10.500 1 6.800c0-4.300 2-6 7-6z" fill="#7b519d" />
      <path d="M5 4c0 4 2.500 6.500 6 7l1-1.500-2-1.300-1 .8c-1-.5-1.800-1.500-2.200-2.500l.9-1L6.500 3.500zM8.500 3.500c2 .2 3 1.300 3.200 3.200" stroke="#fff" strokeWidth=".9" />
    </Svg>
    <Svg>
      <rect x="1.500" y="2.500" width="7" height="12" rx="1" fill="#f4f4f4" stroke="#555" />
      <path d="M3.500 1.500h3" stroke="#555" />
      <path d="M8.500 3v3M12.500 3v3" stroke="#444" strokeWidth="1.300" />
      <path d="M6.500 6h8v2.500l-2.500 2.500H9L6.500 8.500z" fill="#fff" stroke="#444" />
      <path d="M10.500 11v4" stroke="#444" strokeWidth="1.300" />
    </Svg>
    <Svg>
      <g fill="#fff" stroke="#666" strokeWidth=".8">
        <path d="M.5 11.500h2V14h-2zM3.700 9.500h2V14h-2zM6.900 7.500h2V14h-2zM10.100 5h2v9h-2zM13.300 2.500h2V14h-2z" />
      </g>
    </Svg>
    <Svg>
      <path d="M2 5.500h2.500L8.500 2v12l-4-3.500H2z" fill="#fff" stroke="#777" />
      <path d="M10.500 5.500c1.200 1.500 1.200 3.500 0 5M12.500 4c2 2.500 2 5.500 0 8" stroke="#888" />
    </Svg>
  </>
);

const flatTask = 'flex h-[38px] w-[50px] items-center justify-center';
const framedTask = clsx(classic, 'flex h-[38px] w-12 items-center justify-center');

const Taskbar = () => (
  <footer className="flex h-11 shrink-0 items-start border-t border-white px-[2px] pt-[3px]">
    <button className={clsx(classic, "flex h-[38px] w-[52px] items-center gap-px pl-[2px] font-['Open_Sans'] text-[12px] font-bold")}>
      <Svg>
        <path d="M2 3.500C4 2.500 6 2.500 7.500 3.500L6.800 8C5 7 3 7 1 8z" fill="#e8512b" />
        <path d="M8.500 4C10 4.800 12.500 5 15 4l-1 4.500c-2 .8-4.500.6-6.200-.3z" fill="#78b72c" />
        <path d="M.9 9C3 8 5 8 6.600 9l-.8 4.500C4 12.500 2 12.500 0 13.500z" fill="#3a78d0" />
        <path d="M7.600 9.300c1.900 1 4.200 1 6.200.3l-1 4.400c-2 .8-4.300.6-6-.3z" fill="#f4bb22" />
      </Svg>
      Start
    </button>
    <div className="ml-[9px] flex items-center">
      <button aria-label="Chrome" className={framedTask}>{taskIcons.chrome}</button>
      <button aria-label="Firefox" className={clsx(framedTask, 'mx-[2px]')}>{taskIcons.firefox}</button>
      <button aria-label="Battery" className={flatTask}>{taskIcons.battery}</button>
      <button aria-label="Disk" className={flatTask}>{taskIcons.pie}</button>
      <button aria-label="Tree" className={flatTask}>{taskIcons.tree}</button>
      <button
        aria-label="WinBox"
        className="flex h-[38px] w-[44px] items-center justify-center border-2 border-t-[#404040] border-l-[#404040] border-r-white border-b-white bg-white"
      >
        <Ball size={32} />
      </button>
      <span className="h-[38px] w-[3px] border-t border-r border-t-[#404040] border-r-white" />
      <button aria-label="Paint" className={clsx(framedTask, 'ml-[3px]')}>{taskIcons.paint}</button>
    </div>
    <div className="ml-auto flex items-center">
      <dl className="grid w-[86px] grid-cols-[auto_1fr] font-['Liberation_Sans'] text-[11px] leading-[14px]">
        <dt>D:</dt>
        <dd className="text-right">0.0 Mbit/s</dd>
        <dt>U:</dt>
        <dd className="text-right">0.0 Mbit/s</dd>
      </dl>
      <button className="ml-[9px] w-[16px] font-['Liberation_Sans'] text-[11px]">EN</button>
      <span className="ml-1 h-8 w-[2px] border-l border-[#808080] bg-white" />
      <div className="ml-[3px] flex h-[38px] w-[350px] items-center border border-t-[#808080] border-l-[#808080] border-r-white border-b-white pl-[6px]">
        <button aria-label="Show hidden icons">
          <svg width="7" height="8" viewBox="0 0 7 8" fill="none" stroke="#000" strokeWidth="1.200" aria-hidden="true">
            <path d="M.8 3.500l2.700-2.500 2.700 2.500M.8 7.200l2.700-2.500 2.700 2.500" />
          </svg>
        </button>
        <span className="ml-[11px] flex gap-[11px] font-['Open_Sans'] text-[11px]">
          <span>45</span>
          <span>48</span>
        </span>
        <div className="ml-[10px] flex items-center gap-2">{trayIcons}</div>
        <time className="ml-2 flex flex-1 flex-col text-center font-['Open_Sans'] text-[11px] leading-4">
          <span>19:02</span>
          <span className="whitespace-nowrap">29.3.2016 г.</span>
        </time>
        <Svg className="ml-1">
          <path d="M1 3h14.500v8.500H1z" fill="#2f6fc0" stroke="#1d3f78" />
          <path d="M1.500 3.500h13L2 10z" fill="#5b9ae0" />
          <path d="M0 11h6v3H0z" fill="#9fd0f4" />
          <path d="M7 13.500h8" stroke="#333" />
        </Svg>
      </div>
    </div>
  </footer>
);

export default function App() {
  return (
    <div className="flex h-screen min-h-[600px] flex-col overflow-hidden bg-[#d4d0c8] font-['Roboto_Condensed',Roboto,sans-serif] text-[12px] leading-4 text-black">
      <TitleBar />
      <div className="flex h-5 shrink-0 items-center gap-3 pl-[5px]">
        <button>Session</button>
        <button>Settings</button>
        <button>Dashboard</button>
      </div>
      <Toolbar />
      <div className="flex min-h-0 flex-1 border-t border-[#55534f]">
        <Sidebar />
        <main className="relative -mt-px flex-1 overflow-hidden bg-[#808080]">
          <QueueList />
          <SimpleQueueDialog />
        </main>
      </div>
      <Taskbar />
    </div>
  );
}
